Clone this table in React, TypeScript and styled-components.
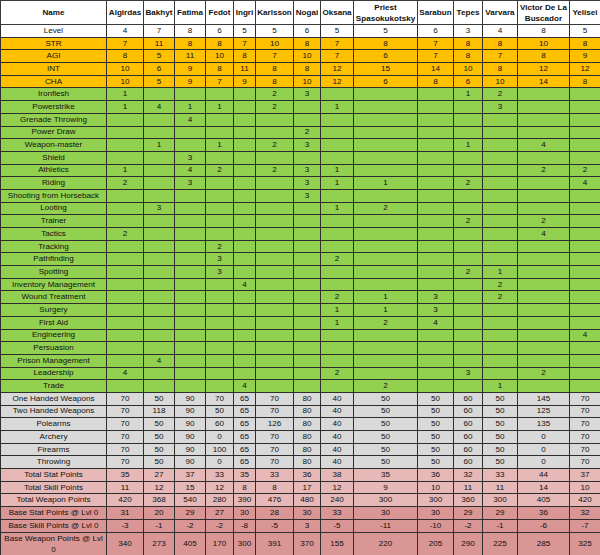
import React from 'react';
import styled, { createGlobalStyle } from 'styled-components';

const GlobalStyle = createGlobalStyle`
	html, body {
		margin: 0;
		padding: 0;
		background: #ffffff;
	}
	body {
		font-family: 'Liberation Sans', Arial, sans-serif;
	}
`;

type Tone = 'white' | 'stat' | 'skill' | 'weapon' | 'total' | 'base';

const tones: Record<Tone, string> = {
	white: '#ffffff',
	stat: '#ffc000',
	skill: '#92d050',
	weapon: '#d9d9d9',
	total: '#e6b8b7',
	base: '#da9694',
};

const names = [
	'Algirdas',
	'Bakhyt',
	'Fatima',
	'Fedot',
	'Ingri',
	'Karlsson',
	'Nogai',
	'Oksana',
	'Priest Spasokukotsky',
	'Sarabun',
	'Tepes',
	'Varvara',
	'Victor De La Buscador',
	'Yelisei',
];

const widths = [106, 37, 31, 31, 28, 22, 38, 27, 33, 64, 36, 29, 35, 52, 31];

type Row = { label: string; tone: Tone; values: (number | string)[]; tall?: boolean };

// sparse skill rows: column index -> value
const skill = (label: string, picks: Record<number, number>): Row => ({
	label,
	tone: 'skill',
	values: names.map((_, i) => (picks[i] !== undefined ? picks[i] : '')),
});

const rows: Row[] = [
	{ label: 'Level', tone: 'white', values: [4, 7, 8, 6, 5, 5, 6, 5, 5, 6, 3, 4, 8, 5] },
	{ label: 'STR', tone: 'stat', values: [7, 11, 8, 8, 7, 10, 8, 7, 8, 7, 8, 8, 10, 8] },
	{ label: 'AGI', tone: 'stat', values: [8, 5, 11, 10, 8, 7, 10, 7, 6, 7, 8, 7, 8, 9] },
	{ label: 'INT', tone: 'stat', values: [10, 6, 9, 8, 11, 8, 8, 12, 15, 14, 10, 8, 12, 12] },
	{ label: 'CHA', tone: 'stat', values: [10, 5, 9, 7, 9, 8, 10, 12, 6, 8, 6, 10, 14, 8] },
	skill('Ironflesh', { 0: 1, 5: 2, 6: 3, 10: 1, 11: 2 }),
	skill('Powerstrike', { 0: 1, 1: 4, 2: 1, 3: 1, 5: 2, 7: 1, 11: 3 }),
	skill('Grenade Throwing', { 2: 4 }),
	skill('Power Draw', { 6: 2 }),
	skill('Weapon-master', { 1: 1, 3: 1, 5: 2, 6: 3, 10: 1, 12: 4 }),
	skill('Shield', { 2: 3 }),
	skill('Athletics', { 0: 1, 2: 4, 3: 2, 5: 2, 6: 3, 7: 1, 12: 2, 13: 2 }),
	skill('Riding', { 0: 2, 2: 3, 6: 3, 7: 1, 8: 1, 10: 2, 13: 4 }),
	skill('Shooting from Horseback', { 6: 3 }),
	skill('Looting', { 1: 3, 7: 1, 8: 2 }),
	skill('Trainer', { 10: 2, 12: 2 }),
	skill('Tactics', { 0: 2, 12: 4 }),
	skill('Tracking', { 3: 2 }),
	skill('Pathfinding', { 3: 3, 7: 2 }),
	skill('Spotting', { 3: 3, 10: 2, 11: 1 }),
	skill('Inventory Management', { 4: 4, 11: 2 }),
	skill('Wound Treatment', { 7: 2, 8: 1, 9: 3, 11: 2 }),
	skill('Surgery', { 7: 1, 8: 1, 9: 3 }),
	skill('First Aid', { 7: 1, 8: 2, 9: 4 }),
	skill('Engineering', { 13: 4 }),
	skill('Persuasion', {}),
	skill('Prison Management', { 1: 4 }),
	skill('Leadership', { 0: 4, 7: 2, 10: 3, 12: 2 }),
	skill('Trade', { 4: 4, 8: 2, 11: 1 }),
	{ label: 'One Handed Weapons', tone: 'weapon', values: [70, 50, 90, 70, 65, 70, 80, 40, 50, 50, 60, 50, 145, 70] },
	{ label: 'Two Handed Weapons', tone: 'weapon', values: [70, 118, 90, 50, 65, 70, 80, 40, 50, 50, 60, 50, 125, 70] },
	{ label: 'Polearms', tone: 'weapon', values: [70, 50, 90, 60, 65, 126, 80, 40, 50, 50, 60, 50, 135, 70] },
	{ label: 'Archery', tone: 'weapon', values: [70, 50, 90, 0, 65, 70, 80, 40, 50, 50, 60, 50, 0, 70] },
	{ label: 'Firearms', tone: 'weapon', values: [70, 50, 90, 100, 65, 70, 80, 40, 50, 50, 60, 50, 0, 70] },
	{ label: 'Throwing', tone: 'weapon', values: [70, 50, 90, 0, 65, 70, 80, 40, 50, 50, 60, 50, 0, 70] },
	{ label: 'Total Stat Points', tone: 'total', values: [35, 27, 37, 33, 35, 33, 36, 38, 35, 36, 32, 33, 44, 37] },
	{ label: 'Total Skill Points', tone: 'total', values: [11, 12, 15, 12, 8, 8, 17, 12, 9, 10, 11, 11, 14, 10] },
	{ label: 'Total Weapon Points', tone: 'total', values: [420, 368, 540, 280, 390, 476, 480, 240, 300, 300, 360, 300, 405, 420] },
	{ label: 'Base Stat Points @ Lvl 0', tone: 'base', values: [31, 20, 29, 27, 30, 28, 30, 33, 30, 30, 29, 29, 36, 32] },
	{ label: 'Base Skill Points @ Lvl 0', tone: 'base', values: [-3, -1, -2, -2, -8, -5, 3, -5, -11, -10, -2, -1, -6, -7] },
	{ label: 'Base Weapon Points @ Lvl 0', tone: 'base', tall: true, values: [340, 273, 405, 170, 300, 391, 370, 155, 220, 205, 290, 225, 285, 325] },
];

const Sheet = styled.table`
	width: 600px;
	table-layout: fixed;
	border-collapse: collapse;
	font-family: 'Liberation Sans', Arial, sans-serif;
	font-size: 8.1px;
	color: #111111;
`;

const HeadRow = styled.tr`
	height: 24px;
`;

const BodyRow = styled.tr<{ $tall?: boolean }>`
	height: ${p => (p.$tall ? '22px' : '12.7px')};
`;

const HeadCell = styled.th`
	background: #ffffff;
	border: 1px solid #3a3a3a;
	padding: 0 1px;
	font-weight: bold;
	line-height: 11px;
	text-align: center;
	vertical-align: middle;
	overflow: hidden;
`;

const Cell = styled.td<{ $tone: Tone }>`
	background: ${p => tones[p.$tone]};
	border: 1px solid #2e2e2e;
	padding: 0 1px;
	line-height: 10px;
	text-align: center;
	vertical-align: middle;
	white-space: nowrap;
	overflow: hidden;
`;

const LabelCell = styled(Cell)<{ $wrap?: boolean }>`
	white-space: ${p => (p.$wrap ? 'normal' : 'nowrap')};
	line-height: ${p => (p.$wrap ? '11px' : '10px')};
`;

export default function App() {
	return (
		<>
			<GlobalStyle />
			<Sheet>
				<colgroup>
					{widths.map((w, i) => (
						<col key={i} style={{ width: w }} />
					))}
				</colgroup>
				<thead>
					<HeadRow>
						<HeadCell>Name</HeadCell>
						{names.map(n => (
							<HeadCell key={n}>{n}</HeadCell>
						))}
					</HeadRow>
				</thead>
				<tbody>
					{rows.map(r => (
						<BodyRow key={r.label} $tall={r.tall}>
							<LabelCell $tone={r.tone} $wrap={r.tall}>
								{r.label}
							</LabelCell>
							{r.values.map((v, i) => (
								<Cell key={i} $tone={r.tone}>
									{v}
								</Cell>
							))}
						</BodyRow>
					))}
				</tbody>
			</Sheet>
		</>
	);
}
